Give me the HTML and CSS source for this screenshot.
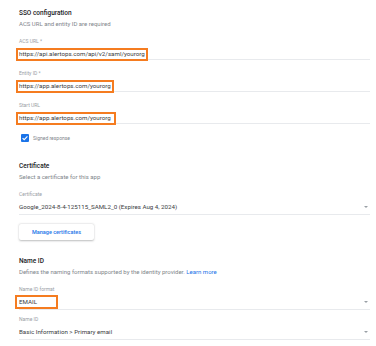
FILE: index.html
```html
<!DOCTYPE html>
<html lang="en">
<head>
    <meta charset="UTF-8">
    <meta name="viewport" content="width=device-width, initial-scale=1.0">
    <title>SSO configuration</title>
    <link rel="stylesheet" href="styles.css">
</head>
<body>
    <div class="page">
        <div class="section">
            <div class="heading">SSO configuration</div>
            <div class="desc">ACS URL and entity ID are required</div>

            <div class="field first">
                <div class="label">ACS URL *</div>
                <div class="value input"><span class="mark">https://api.alertops.com/api/v2/saml/yourorg</span></div>
            </div>
            <div class="field">
                <div class="label">Entity ID *</div>
                <div class="value input"><span class="mark">https://app.alertops.com/yourorg</span></div>
            </div>
            <div class="field">
                <div class="label">Start URL</div>
                <div class="value input"><span class="mark wide">https://app.alertops.com/yourorg</span></div>
            </div>

            <div class="check">
                <span class="box">
                    <svg width="8" height="8" viewBox="0 0 8 8"><path d="M1.6 4.1 L3.2 5.7 L6.4 2.4" fill="none" stroke="#fff" stroke-width="1.1"/></svg>
                </span>
                <span class="check-text">Signed response</span>
            </div>
        </div>

        <div class="section cert">
            <div class="heading">Certificate</div>
            <div class="desc">Select a certificate for this app</div>
            <div class="field first">
                <div class="label">Certificate</div>
                <div class="value select">
                    <span>Google_2024-8-4-125115_SAML2_0 (Expires Aug 4, 2024)</span>
                    <span class="arrow"></span>
                </div>
            </div>
            <button class="btn">Manage certificates</button>
        </div>

        <div class="section nameid">
            <div class="heading">Name ID</div>
            <div class="desc">Defines the naming formats supported by the identity provider. <a href="#" class="link">Learn more</a></div>
            <div class="field first">
                <div class="label">Name ID format</div>
                <div class="value select">
                    <span class="mark email">EMAIL</span>
                    <span class="arrow"></span>
                </div>
            </div>
            <div class="field tight">
                <div class="label">Name ID</div>
                <div class="value select">
                    <span>Basic Information &gt; Primary email</span>
                    <span class="arrow"></span>
                </div>
            </div>
        </div>
    </div>
</body>
</html>
```

FILE: styles.css
```css
body {
    margin: 0;
    background-color: #fff;
    font-family: Roboto, "Liberation Sans", sans-serif;
    color: #202124;
}

.page {
    padding: 8px 6px 0 19px;
}

.heading {
    font-size: 6.5px;
    font-weight: 500;
    line-height: 10px;
    color: #202124;
}

.desc {
    margin-top: 1px;
    font-size: 6px;
    line-height: 10px;
    color: #80868b;
}

.link {
    color: #1a73e8;
    text-decoration: none;
}

.field {
    margin-top: 9px;
}

.field.first {
    margin-top: 8px;
}

.field.tight {
    margin-top: 5px;
}

.label {
    font-size: 5px;
    line-height: 8px;
    color: #9aa0a6;
}

.value {
    display: flex;
    align-items: center;
    border-bottom: 1px solid #e8eaed;
    font-size: 6.2px;
    color: #3c4043;
}

.input {
    height: 12px;
    padding-top: 2px;
}

.select {
    height: 14px;
    padding-top: 2px;
    justify-content: space-between;
}

.mark {
    display: inline-block;
    line-height: 9px;
    padding: 0 1px;
    margin-left: -1px;
    margin-top: 3px;
    outline: 2px solid #f57c20;
}

.mark.wide {
    padding-right: 3px;
}

.mark.email {
    width: 36px;
    margin-top: 0;
    line-height: 10px;
    padding-left: 2px;
    margin-left: -2px;
}

.arrow {
    width: 0;
    height: 0;
    margin-right: 2px;
    border-left: 2.5px solid transparent;
    border-right: 2.5px solid transparent;
    border-top: 2.5px solid #9aa0a6;
}

.check {
    display: flex;
    align-items: center;
    margin-top: 10px;
    padding-left: 2px;
}

.box {
    display: flex;
    width: 8px;
    height: 8px;
    border-radius: 1px;
    background-color: #1a73e8;
}

.check-text {
    margin-left: 4px;
    font-size: 5px;
    color: #80868b;
}

.cert {
    margin-top: 19px;
}

.btn {
    display: block;
    margin-top: 9px;
    width: 75px;
    height: 16px;
    padding: 0;
    border: none;
    border-radius: 2px;
    background-color: #fff;
    box-shadow: 0 0.5px 2px rgba(60, 64, 67, 0.35);
    font-family: Roboto, "Liberation Sans", sans-serif;
    font-size: 5.5px;
    font-weight: 500;
    color: #1a73e8;
}

.nameid {
    margin-top: 16px;
}
```
